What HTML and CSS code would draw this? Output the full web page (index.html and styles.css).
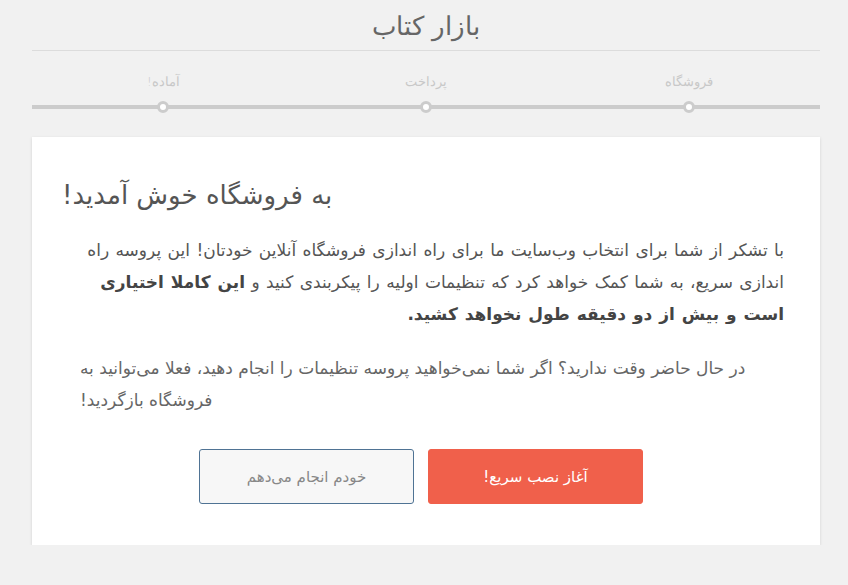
FILE: index.html
```html
<!DOCTYPE html>
<html lang="fa" dir="rtl">
<head>
<meta charset="utf-8">
<title>بازار کتاب</title>
<link rel="stylesheet" href="styles.css">
</head>
<body>
<div class="wrap">
  <h1 class="logo">بازار کتاب</h1>
  <ol class="steps">
    <li class="step"><span class="label">فروشگاه</span><span class="dot"></span></li>
    <li class="step"><span class="label">پرداخت</span><span class="dot"></span></li>
    <li class="step"><span class="label">آماده!</span><span class="dot"></span></li>
  </ol>
  <div class="card">
    <h2 class="title">به فروشگاه خوش آمدید!</h2>
    <p class="intro">با تشکر از شما برای انتخاب وب‌سایت ما برای راه اندازی فروشگاه آنلاین خودتان! این پروسه راه اندازی سریع، به شما کمک خواهد کرد که تنظیمات اولیه را پیکربندی کنید و <strong>این کاملا اختیاری است و بیش از دو دقیقه طول نخواهد کشید.</strong></p>
    <p class="later">در حال حاضر وقت ندارید؟ اگر شما نمی‌خواهید پروسه تنظیمات را انجام دهید، فعلا می‌توانید به فروشگاه بازگردید!</p>
    <div class="actions">
      <a class="btn primary" href="#">آغاز نصب سریع!</a>
      <a class="btn secondary" href="#">خودم انجام می‌دهم</a>
    </div>
  </div>
</div>
</body>
</html>
```
FILE: styles.css
```css
html, body {
  margin: 0;
  padding: 0;
  background: #f1f1f1;
}
body {
  font-family: "DejaVu Sans", sans-serif;
  color: #555;
}
.wrap {
  width: 788px;
  margin: 0 28px 0 32px;
}
.logo {
  margin: 0;
  height: 50px;
  border-bottom: 1px solid #dcdcdc;
  text-align: center;
  font-size: 26px;
  font-weight: 300;
  line-height: 52px;
  color: #666;
}
.steps {
  list-style: none;
  margin: 0;
  padding: 18px 0 0;
  display: flex;
  height: 64px;
  box-sizing: border-box;
}
.step {
  flex: 1;
  display: flex;
  flex-direction: column;
  align-items: center;
  border-bottom: 4px solid #ccc;
  height: 36px;
  position: relative;
}
.label {
  font-size: 13px;
  color: #c8c8c8;
  font-weight: 300;
  line-height: 26px;
}
.dot {
  position: absolute;
  bottom: -8px;
  width: 6px;
  height: 6px;
  border: 3px solid #ccc;
  border-radius: 50%;
  background: #fff;
}
.card {
  margin-top: 22px;
  background: #fff;
  padding: 42px 36px 41px 30px;
  box-shadow: 0 1px 3px rgba(0,0,0,0.13);
}
.title {
  margin: 0 0 23px;
  text-align: left;
  font-size: 26px;
  font-weight: normal;
  line-height: 32px;
  color: #555;
}
.intro {
  margin: 0 0 22px;
  padding-left: 12px;
  font-size: 17px;
  line-height: 32px;
  word-spacing: 1px;
  color: #555;
  text-align: right;
}
.intro strong {
  color: #444;
}
.later {
  margin: 0 0 33px;
  font-size: 17px;
  line-height: 32px;
  color: #666;
  padding-right: 32px;
  padding-left: 18px;
  text-align: left;
}
.actions {
  display: flex;
  justify-content: center;
  gap: 14px;
  padding-right: 4px;
}
.btn {
  width: 215px;
  height: 55px;
  box-sizing: border-box;
  display: flex;
  align-items: center;
  justify-content: center;
  border-radius: 3px;
  font-size: 15px;
  text-decoration: none;
}
.primary {
  background: #f0604b;
  color: #fff;
  border: 1px solid #f0604b;
}
.secondary {
  background: #f7f7f7;
  color: #888;
  border: 1px solid #4f7394;
}
```
